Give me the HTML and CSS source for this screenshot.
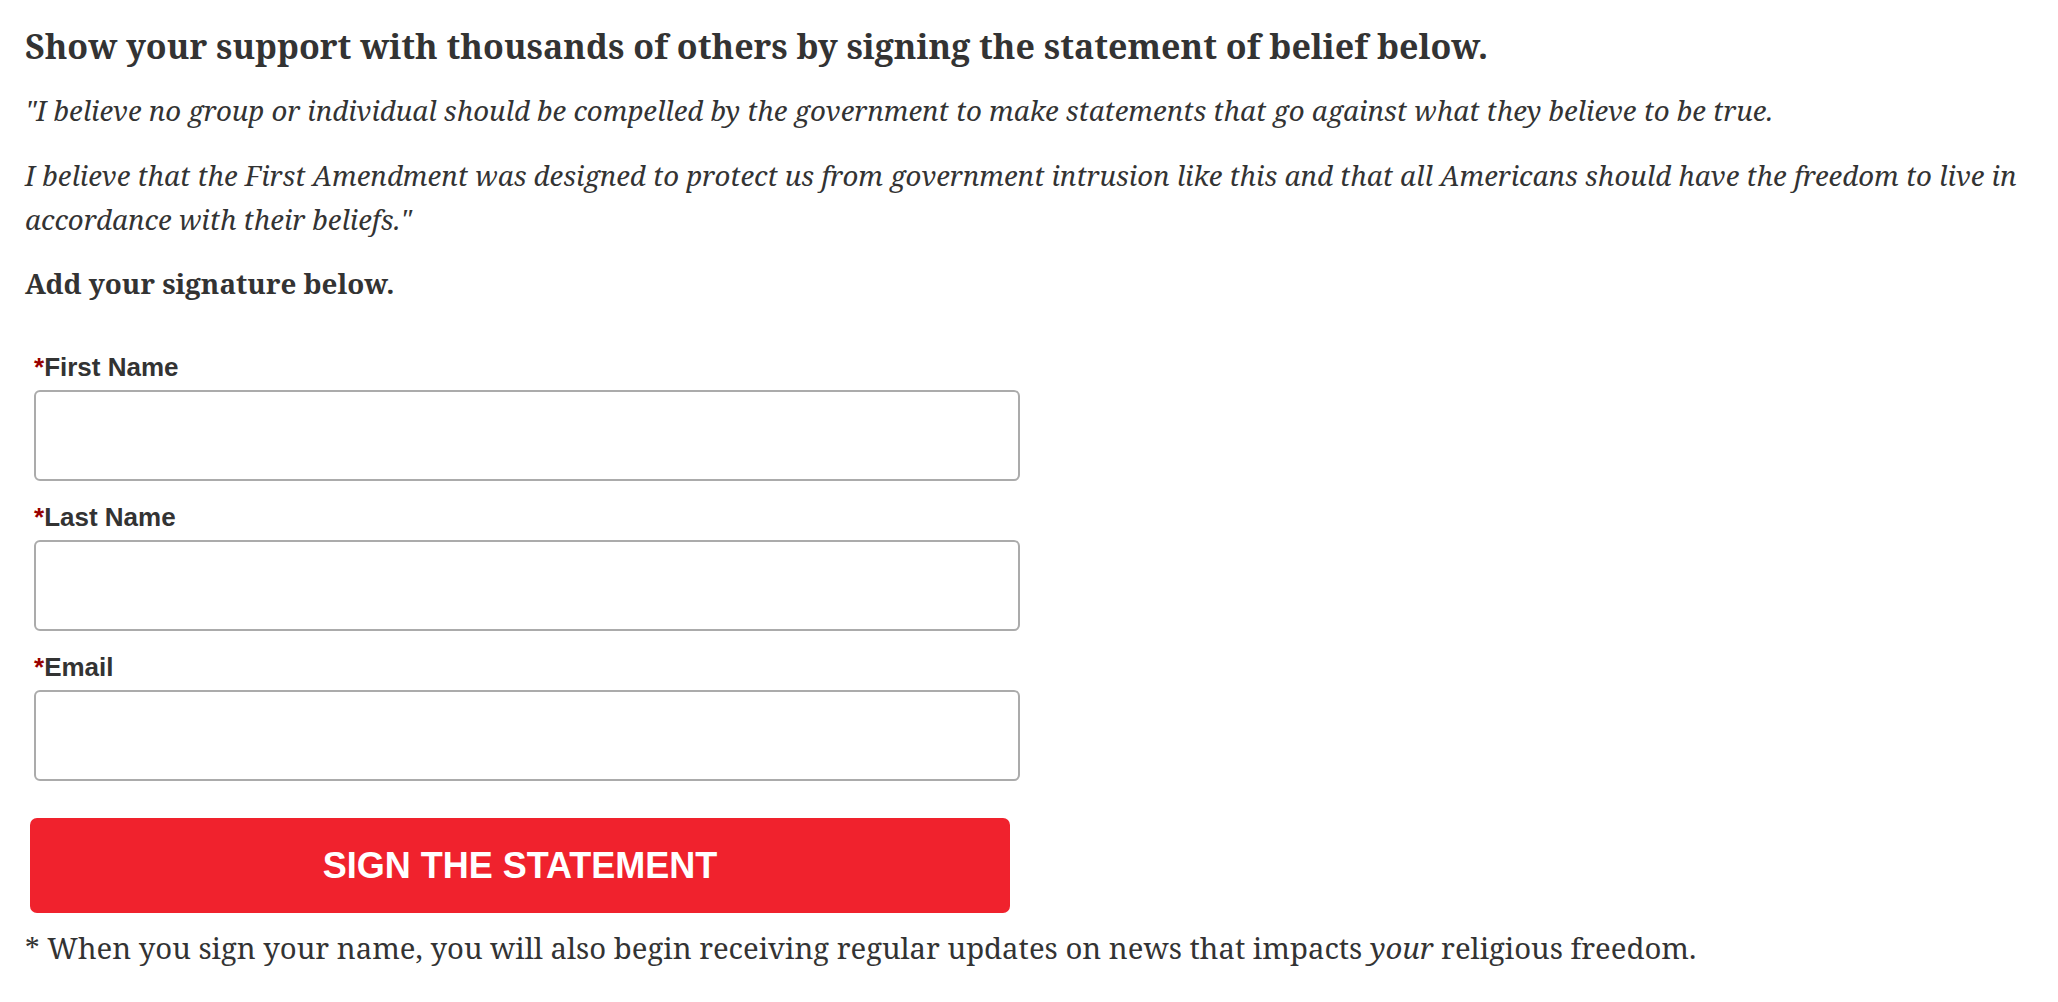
FILE: index.html
```html
<!DOCTYPE html>
<html lang="en">
<head>
<meta charset="utf-8">
<title>Sign the Statement</title>
<link rel="stylesheet" href="styles.css">
</head>
<body>
<main class="page">
  <h3 class="lead">Show your support with thousands of others by signing the statement of belief below.</h3>
  <p class="quote quote-first">"I believe no group or individual should be compelled by the government to make statements that go against what they believe to be true.</p>
  <p class="quote">I believe that the First Amendment was designed to protect us from government intrusion like this and that all Americans should have the freedom to live in accordance with their beliefs."</p>
  <h4 class="sub">Add your signature below.</h4>

  <form class="form" onsubmit="return false;">
    <div class="field">
      <label class="label" for="fn"><span class="req">*</span>First Name</label>
      <input class="input" id="fn" type="text">
    </div>
    <div class="field">
      <label class="label" for="ln"><span class="req">*</span>Last Name</label>
      <input class="input" id="ln" type="text">
    </div>
    <div class="field">
      <label class="label" for="em"><span class="req">*</span>Email</label>
      <input class="input" id="em" type="email">
    </div>
    <button class="submit" type="submit">SIGN THE STATEMENT</button>
  </form>

  <p class="note">* When you sign your name, you will also begin receiving regular updates on news that impacts <em>your</em> religious freedom.</p>
</main>
</body>
</html>
```
FILE: styles.css
```css
html, body {
  margin: 0;
  padding: 0;
  background: #ffffff;
}

body {
  font-family: "Noto Serif", "DejaVu Serif", serif;
  color: #333333;
}

.page {
  padding: 24px 25px 0 25px;
}

.lead {
  margin: 0 0 20px 0;
  font-size: 34px;
  line-height: 44px;
  font-weight: 700;
}

.quote {
  margin: 0 0 21px 0;
  font-size: 27.6px;
  line-height: 44px;
  font-style: italic;
}

.sub {
  margin: -1px 0 0 0;
  font-size: 27.8px;
  line-height: 44px;
  font-weight: 700;
}

.form {
  margin: 47px 0 0 0;
  display: flex;
  flex-direction: column;
}

.field {
  display: flex;
  flex-direction: column;
  padding-left: 9px;
  margin-bottom: 21px;
}

.field:last-of-type {
  margin-bottom: 37px;
}

.label {
  font-family: "Liberation Sans", Arial, sans-serif;
  font-weight: 700;
  font-size: 26px;
  line-height: 30px;
  color: #333333;
  margin-bottom: 8px;
}

.req {
  color: #990000;
}

.input {
  box-sizing: border-box;
  width: 986px;
  height: 91px;
  border: 2px solid #ababab;
  border-radius: 6px;
  background: #ffffff;
  margin: 0;
  padding: 0 12px;
  font-size: 26px;
  font-family: "Liberation Sans", Arial, sans-serif;
  outline: none;
}

.submit {
  box-sizing: border-box;
  margin: 0 0 0 5px;
  width: 980px;
  height: 95px;
  border: none;
  border-radius: 7px;
  background: #f0222d;
  color: #ffffff;
  font-family: "Liberation Sans", Arial, sans-serif;
  font-weight: 700;
  font-size: 36px;
  line-height: 95px;
  padding: 0;
  cursor: pointer;
  text-align: center;
}

.note {
  margin: 13px 0 0 0;
  font-size: 29.3px;
  line-height: 44px;
}

.note em {
  font-style: italic;
}
```
